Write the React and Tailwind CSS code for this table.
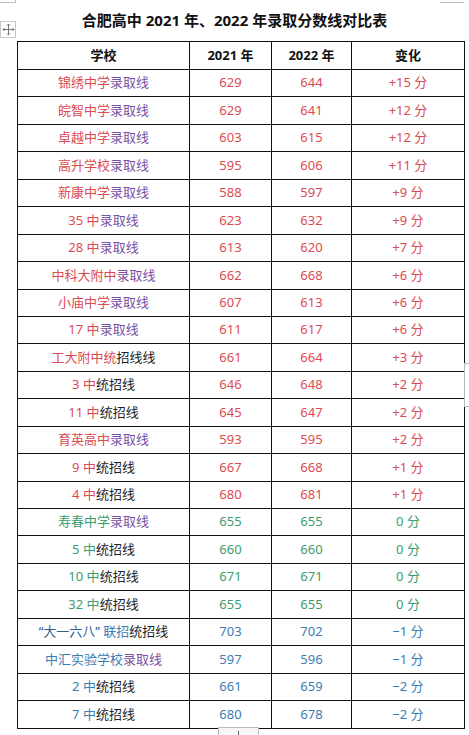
import React from 'react';

const R = '#dc4a52';
const P = '#7a509f';
const G = '#3c9c6c';
const B = '#3b7db3';
const K = '#222222';

// name parts: [text, color]
const rows = [
  { name: [['锦绣中学', R], ['录取线', P]], a: 629, b: 644, d: '+15 分', c: R },
  { name: [['皖智中学', R], ['录取线', P]], a: 629, b: 641, d: '+12 分', c: R },
  { name: [['卓越中学', R], ['录取线', P]], a: 603, b: 615, d: '+12 分', c: R },
  { name: [['高升学校', R], ['录取线', P]], a: 595, b: 606, d: '+11 分', c: R },
  { name: [['新康中学', R], ['录取线', P]], a: 588, b: 597, d: '+9 分', c: R },
  { name: [['35 中', R], ['录取线', P]], a: 623, b: 632, d: '+9 分', c: R },
  { name: [['28 中', R], ['录取线', P]], a: 613, b: 620, d: '+7 分', c: R },
  { name: [['中科大附中', R], ['录取线', P]], a: 662, b: 668, d: '+6 分', c: R },
  { name: [['小庙中学', R], ['录取线', P]], a: 607, b: 613, d: '+6 分', c: R },
  { name: [['17 中', R], ['录取线', P]], a: 611, b: 617, d: '+6 分', c: R },
  { name: [['工大附中统', R], ['招线线', K]], a: 661, b: 664, d: '+3 分', c: R },
  { name: [['3 中', R], ['统招线', K]], a: 646, b: 648, d: '+2 分', c: R },
  { name: [['11 中', R], ['统招线', K]], a: 645, b: 647, d: '+2 分', c: R },
  { name: [['育英高中', R], ['录取线', P]], a: 593, b: 595, d: '+2 分', c: R },
  { name: [['9 中', R], ['统招线', K]], a: 667, b: 668, d: '+1 分', c: R },
  { name: [['4 中', R], ['统招线', K]], a: 680, b: 681, d: '+1 分', c: R },
  { name: [['寿春中学', G], ['录取线', P]], a: 655, b: 655, d: '0 分', c: G },
  { name: [['5 中', G], ['统招线', K]], a: 660, b: 660, d: '0 分', c: G },
  { name: [['10 中', G], ['统招线', K]], a: 671, b: 671, d: '0 分', c: G },
  { name: [['32 中', G], ['统招线', K]], a: 655, b: 655, d: '0 分', c: G },
  { name: [['“大一六八”', '#2f5f8a'], [' 联招', B], ['统招线', K]], a: 703, b: 702, d: '−1 分', c: B },
  { name: [['中汇实验学校', B], ['录取线', P]], a: 597, b: 596, d: '−1 分', c: B },
  { name: [['2 中', B], ['统招线', K]], a: 661, b: 659, d: '−2 分', c: B },
  { name: [['7 中', B], ['统招线', K]], a: 680, b: 678, d: '−2 分', c: B },
];

const cell = 'border-[1.5px] border-[#111] text-center align-middle p-0';

function MoveHandle() {
  return (
    <div className="absolute left-[0px] top-[21px] w-[16px] h-[17px] border border-[#c8c8c8] bg-white flex items-center justify-center">
      <svg width="13" height="13" viewBox="0 0 13 13" fill="none" stroke="#777" strokeWidth="1">
        <path d="M6.5 1v11M1 6.5h11" />
        <path d="M5 2.5l1.5-1.5 1.5 1.5M5 10.5l1.5 1.5 1.5-1.5M2.5 5L1 6.5 2.5 8M10.5 5L12 6.5 10.5 8" />
      </svg>
    </div>
  );
}

export default function App() {
  return (
    <div
      className="relative w-[469px] h-[735px] bg-white overflow-hidden"
      style={{ fontFamily: '"Noto Sans", "Noto Sans CJK SC", sans-serif' }}
    >
      {/* editor chrome fragments along the page edges */}
      <div className="absolute left-0 top-0 w-[16px] h-[3px] border-b border-r border-[#bbb]" />
      <div className="absolute left-[440px] top-0 w-[24px] h-[3px] border-b border-[#bbb]" />
      <div className="absolute left-[464px] top-[363px] w-[5px] h-[44px] border-t border-b border-l border-[#bbb]" />
      <div className="absolute left-[218px] top-[727px] w-[41px] h-[10px] border-l border-r border-t border-[#bbb] bg-[#f6f6f6] flex justify-center">
        <div className="w-px h-[5px] mt-[3px] bg-[#666]" />
      </div>

      <MoveHandle />

      <div className="h-[41px] flex items-center justify-center pb-[1px]">
        <h1 className="text-[15px] font-bold text-[#111]">
          合肥高中 2021 年、2022 年录取分数线对比表
        </h1>
      </div>

      <table className="ml-[17px] w-[447px] table-fixed border-collapse text-[13px]">
        <colgroup>
          <col className="w-[172px]" />
          <col className="w-[82px]" />
          <col className="w-[80px]" />
          <col className="w-[113px]" />
        </colgroup>
        <thead>
          <tr className="h-[28px]">
            <th className={`${cell} font-bold text-[#111]`}>学校</th>
            <th className={`${cell} font-bold text-[#111]`}>2021 年</th>
            <th className={`${cell} font-bold text-[#111]`}>2022 年</th>
            <th className={`${cell} font-bold text-[#111]`}>变化</th>
          </tr>
        </thead>
        <tbody>
          {rows.map((r, i) => (
            <tr key={i} className="h-[27.45px]">
              <td className={`${cell} whitespace-nowrap`}>
                {r.name.map(([t, c], j) => (
                  <span key={j} style={{ color: c }}>
                    {t}
                  </span>
                ))}
              </td>
              <td className={cell} style={{ color: r.c }}>
                {r.a}
              </td>
              <td className={cell} style={{ color: r.c }}>
                {r.b}
              </td>
              <td className={cell} style={{ color: r.c }}>
                {r.d}
              </td>
            </tr>
          ))}
        </tbody>
      </table>
    </div>
  );
}
